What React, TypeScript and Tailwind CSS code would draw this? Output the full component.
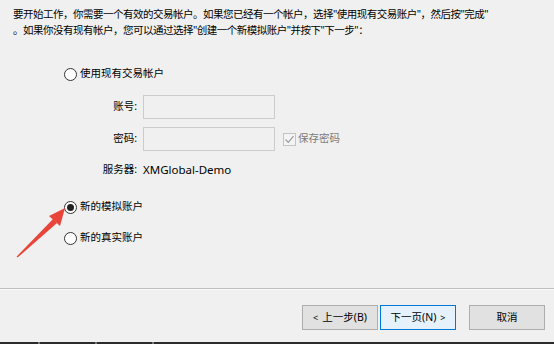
import React from 'react';

const Radio = ({ checked = false, label }: { checked?: boolean; label: string }) => (
  <div className="flex items-center h-[16px] gap-[3px]">
    <span className="w-[13px] h-[13px] rounded-full border border-[#333] bg-white flex items-center justify-center">
      {checked && <span className="w-[7px] h-[7px] rounded-full bg-[#222]" />}
    </span>
    <span className="text-[10.5px] text-black">{label}</span>
  </div>
);

const FieldRow = ({ label, children }: { label: string; children: React.ReactNode }) => (
  <div className="flex items-center gap-[6px]">
    <span className="w-[73px] text-right text-[10.5px] text-black">{label}</span>
    {children}
  </div>
);

const WizardButton = ({ children, primary = false }: { children: React.ReactNode; primary?: boolean }) => (
  <button
    className={`w-[76px] h-[25px] border text-[10.5px] text-black flex items-center justify-center ${
      primary ? 'border-[#0078d7] bg-[#e5f1fb]' : 'border-[#adadad] bg-[#e1e1e1]'
    }`}
  >
    {children}
  </button>
);

export default function App() {
  return (
    <div className="relative w-[554px] h-[344px] overflow-hidden bg-[#f0f0f0] flex flex-col font-['Noto_Sans','Noto_Sans_CJK_SC',sans-serif]">
      {/* intro */}
      <div className="pt-[6px] pl-[13px] text-[10.5px] tracking-[-0.5px] leading-[16px] text-black">
        <p>要开始工作，你需要一个有效的交易帐户。如果您已经有一个帐户，选择"使用现有交易账户"，然后按"完成"</p>
        <p>。如果你没有现有帐户，您可以通过选择"创建一个新模拟账户"并按下"下一步"：</p>
      </div>

      <div className="mt-[28px] pl-[64px]">
        <Radio label="使用现有交易帐户" />
      </div>

      {/* login fields */}
      <div className="mt-[13px] pl-[64px] flex flex-col gap-[8px]">
        <FieldRow label="账号:">
          <div className="w-[132px] h-[24px] border border-[#cccccc] bg-[#f0f0f0]" />
        </FieldRow>
        <FieldRow label="密码:">
          <div className="w-[132px] h-[24px] border border-[#cccccc] bg-[#f0f0f0]" />
          <div className="ml-[2px] flex items-center gap-[2px]">
            <span className="w-[13px] h-[13px] border border-[#c4c4c4] bg-[#f4f4f4] flex items-center justify-center">
              <svg width="11" height="11" viewBox="0 0 11 11">
                <path d="M1.5 5.5 L4.3 8.3 L9.5 2.2" fill="none" stroke="#9a9a9a" strokeWidth="1.2" />
              </svg>
            </span>
            <span className="text-[10.5px] text-[#7a7a7a]">保存密码</span>
          </div>
        </FieldRow>
      </div>

      <div className="mt-[11px] pl-[64px] flex items-center gap-[6px] h-[16px]">
        <span className="w-[73px] text-right text-[10.5px] text-black">服务器:</span>
        <span className="text-[11.5px] text-black">XMGlobal-Demo</span>
      </div>

      <div className="mt-[21px] pl-[64px]">
        <Radio checked label="新的模拟账户" />
      </div>
      <div className="mt-[15px] pl-[64px]">
        <Radio label="新的真实账户" />
      </div>

      {/* separator */}
      <div className="mt-[42px] border-t border-b border-t-[#bfbfbf] border-b-[#fafafa]" />

      {/* buttons */}
      <div className="mt-[15px] pr-[9px] flex justify-end">
        <div className="flex gap-[2px]">
          <WizardButton>
            <span className="mr-[4px] text-[9px]">&lt;</span>上一步(B)
          </WizardButton>
          <WizardButton primary>
            下一页(N)<span className="ml-[4px] text-[9px]">&gt;</span>
          </WizardButton>
        </div>
        <div className="ml-[13px]">
          <WizardButton>取消</WizardButton>
        </div>
      </div>

      {/* window edge */}
      <div className="mt-auto h-[2px] bg-[#2b2b2b] flex">
        <span className="ml-[38px] w-[2px] bg-[#777]" />
        <span className="ml-[55px] w-[2px] bg-[#777]" />
        <span className="ml-[55px] w-[2px] bg-[#777]" />
      </div>

      {/* red annotation arrow */}
      <svg className="absolute left-[10px] top-[200px]" width="60" height="62" viewBox="0 0 60 62">
        <polygon points="55,8 39,16 50,26" fill="#e8443a" />
        <polygon points="43,19 47,23 7.6,57.6 6.6,56.6" fill="#e8443a" />
      </svg>
    </div>
  );
}
